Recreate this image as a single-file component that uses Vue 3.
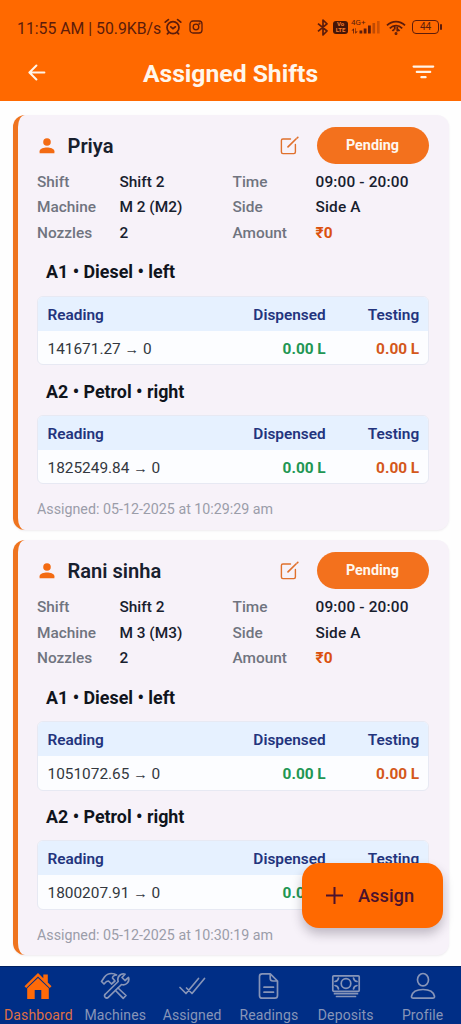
<script setup>
const shifts = [
  {
    name: 'Priya',
    machine: 'M 2 (M2)',
    assigned: '05-12-2025 at 10:29:29 am',
    nozzles: [
      { title: 'A1 • Diesel • left', from: '141671.27' },
      { title: 'A2 • Petrol • right', from: '1825249.84' },
    ],
  },
  {
    name: 'Rani sinha',
    machine: 'M 3 (M3)',
    assigned: '05-12-2025 at 10:30:19 am',
    nozzles: [
      { title: 'A1 • Diesel • left', from: '1051072.65' },
      { title: 'A2 • Petrol • right', from: '1800207.91' },
    ],
  },
]
const tabs = ['Dashboard', 'Machines', 'Assigned', 'Readings', 'Deposits', 'Profile']
</script>

<template>
  <div class="screen">
    <header class="top">
      <div class="status">
        <span class="clock">11:55 AM | 50.9KB/s</span>
        <svg class="alarm" width="18" height="18" viewBox="0 0 18 18" fill="none" stroke="currentColor" stroke-width="1.7" stroke-linecap="round">
          <circle cx="9" cy="9.6" r="6" /><path d="M6.8 8.8 9 10.6l2.4-1.8M1.2 4.2 4.4 1.6M16.8 4.2l-3.2-2.6M4.6 14.6 3.4 15.8M13.4 14.6l1.2 1.2" />
        </svg>
        <svg class="insta" width="14" height="14" viewBox="0 0 14 14" fill="none" stroke="currentColor" stroke-width="1.3">
          <rect x="1" y="1" width="12" height="12" rx="3" /><circle cx="7" cy="7" r="2.8" /><circle cx="10.5" cy="3.6" r=".4" />
        </svg>
        <span class="grow"></span>
        <svg class="bt" width="12" height="17" viewBox="0 0 12 17" fill="none" stroke="currentColor" stroke-width="1.7" stroke-linejoin="round">
          <path d="M1 4.6 10 12l-4 4V1l4 3.8L1 12.4" />
        </svg>
        <span class="volte"><b>Vo</b><b>LTE</b></span>
        <span class="cell">
          <span class="gen">4G+</span>
          <svg width="30" height="14" viewBox="0 0 30 14" fill="currentColor">
            <path d="M2.2 13.500V10.500H.4L3 8.200V13.500zM4.800 8.200V11.500h2l-2.600 2.300V8.200z" />
            <rect x="8.500" y="10.5" width="2.8" height="3" /><rect x="12.700" y="8.5" width="2.8" height="5" /><rect x="17" y="5.5" width="2.8" height="8" />
            <rect x="21.5" y="3" width="2.6" height="10.5" opacity=".4" /><rect x="26" y="1" width="2.6" height="12.5" opacity=".3" />
          </svg>
        </span>
        <svg class="wifi" width="20" height="15" viewBox="0 0 20 15" fill="none" stroke="currentColor" stroke-width="1.8">
          <path d="M1 5.4c5.2-5 12.8-5 18 0M3.8 8.4c3.6-3.6 8.8-3.6 12.4 0M6.4 11c.8-.9 1.6-1.3 2-1.5M13.6 11c-.8-.9-1.6-1.3-2-1.5M8.7 5v4.5M11.3 7v4.5" /><circle cx="10" cy="13.5" r=".6" />
        </svg>
        <span class="battery">44</span>
      </div>
      <div class="bar">
        <svg width="18" height="17" viewBox="0 0 18 17" fill="none" stroke="#fff4e8" stroke-width="2" stroke-linecap="round" stroke-linejoin="round">
          <path d="M16.4 8.5H1.6M8.4 1.5l-7 7 7 7" />
        </svg>
        <h1>Assigned Shifts</h1>
        <svg width="23" height="14" viewBox="0 0 23 14" stroke="#fff4e8" stroke-width="2.2" stroke-linecap="round">
          <path d="M1.6 1.6h19.6M4.8 6.9h13.4M9.4 12.2h4.2" />
        </svg>
      </div>
    </header>

    <main class="list">
      <section v-for="s in shifts" :key="s.name" class="card">
        <div class="head">
          <svg class="person" width="16" height="16" viewBox="0 0 16 16" fill="#f36b13">
            <circle cx="8" cy="4" r="3.8" /><path d="M.6 15.2v-2C.6 10.6 5 9.5 8 9.5s7.4 1.1 7.4 3.7v2z" />
          </svg>
          <h2>{{ s.name }}</h2>
          <svg class="edit" width="19" height="19" viewBox="0 0 19 19" fill="none" stroke="#e0712d" stroke-width="1.4" stroke-linecap="round" stroke-linejoin="round">
            <path d="M10.5 3H2.9Q1.4 3 1.4 4.5v11.6q0 1.5 1.5 1.5h11q1.5 0 1.5-1.5V8.5" /><path d="m8 10.8 8-7.8M17.3 1.8l.5-.5" stroke-width="1.7" />
          </svg>
          <span class="pill">Pending</span>
        </div>
        <dl class="info">
          <dt>Shift</dt><dd>Shift 2</dd><dt>Time</dt><dd>09:00 - 20:00</dd>
          <dt>Machine</dt><dd>{{ s.machine }}</dd><dt>Side</dt><dd>Side A</dd>
          <dt>Nozzles</dt><dd>2</dd><dt>Amount</dt><dd class="amount">₹0</dd>
        </dl>
        <div v-for="n in s.nozzles" :key="n.title" class="nozzle">
          <h3>{{ n.title }}</h3>
          <div class="table">
            <div class="row th"><span>Reading</span><span>Dispensed</span><span>Testing</span></div>
            <div class="row td"><span>{{ n.from }} <i>→</i> 0</span><span class="green">0.00 L</span><span class="rust">0.00 L</span></div>
          </div>
        </div>
        <p class="assigned">Assigned: {{ s.assigned }}</p>
      </section>
    </main>

    <button class="fab">
      <svg width="17" height="17" viewBox="0 0 17 17" stroke="currentColor" stroke-width="2"><path d="M8.5 0v17M0 8.5h17" /></svg>
      <span>Assign</span>
    </button>

    <nav class="tabs">
      <div v-for="(t, i) in tabs" :key="t" class="tab" :class="{ active: i === 0 }">
        <svg width="30" height="28" viewBox="0 0 30 28" fill="none" stroke="currentColor" stroke-width="1.7" stroke-linejoin="round" stroke-linecap="round">
          <template v-if="i === 0">
            <path fill="currentColor" stroke="none" d="M1.5 14.2 15 1l5.3 5.2V2.4h4.5v8.2l3.7 3.6-1.7 1.7L15 4.5 3.2 15.9z" />
            <path fill="currentColor" stroke="none" d="M4.2 16.3 15 6l10.8 10.3V27h-7.5v-9h-6.6v9H4.2z" />
          </template>
          <template v-else-if="i === 1">
            <path d="M1.5 9.5 4.5 5q2.5-3.500 7-3.500 3 0 5 1.500-4 .5-4 3l2.500 3-3.500 3-3-3-2 .5L4 12zM18 16l8 7.500-2.800 2.800-7.700-7.800" />
            <path d="M25 2.2q-3-1-5.500 1.300t-1.300 6L5.500 22q-1.800 1.500-.3 3.300 1.700 1.500 3.300-.2L21.500 12.500q3.500 1 5.800-1.500T28.500 5.500L25 8.500l-3-3z" />
          </template>
          <template v-else-if="i === 2">
            <path d="m3 15.5 6 6L21.5 6.5M9.5 16l5.5 5.500L27.500 6.500" />
          </template>
          <template v-else-if="i === 3">
            <path d="M8.2 1.8h8.1l7.200 7.200v14.500q0 2.700-2.700 2.700H8.2q-2.700 0-2.700-2.700V4.500q0-2.700 2.700-2.700M16.200 2v4.300q0 2.700 2.700 2.700h4.400M10 15.200h9.500M10 20.200h9.500" />
          </template>
          <template v-else-if="i === 4">
            <rect x="1.8" y="3.8" width="26.4" height="15.5" rx="1" /><circle cx="15" cy="11.5" r="4.8" />
            <path d="M4 9.5Q7 9 7.500 6M4 13.500q3 .5 3.500 3.500M26 9.500Q23 9 22.500 6M26 13.500q-3 .5-3.500 3.500M3.500 21.700h23M5.500 24.500h19" />
          </template>
          <template v-else>
            <ellipse cx="15" cy="7.7" rx="5.5" ry="6.2" /><path d="M5.3 26.2q-2 0-1.800-2C4.500 19.500 9 17.500 15 17.500s10.500 2 11.500 6.700q.2 2-1.800 2z" />
          </template>
        </svg>
        <span>{{ t }}</span>
      </div>
    </nav>
  </div>
</template>

<style>
body { margin: 0; background: #fefefe; }
</style>

<style scoped>
* { box-sizing: border-box; }
.screen { position: relative; width: 461px; height: 1024px; overflow: hidden; display: flex; flex-direction: column; background: #fefefe; font-family: Roboto, "Noto Sans", sans-serif; }
.top { flex: none; height: 101px; background: #ff6900; }
.status { display: flex; align-items: center; height: 54px; padding: 0 22px 0 17px; color: #5c1c0b; }
.clock { font-size: 15.8px; line-height: 20px; width: 145px; margin-top: 3px; white-space: nowrap; }
.alarm { margin-left: 2px; }
.insta { margin-left: 7px; }
.grow { flex: 1; }
.volte { display: flex; flex-direction: column; align-items: center; justify-content: center; width: 15px; height: 13px; margin-left: 4px; border-radius: 3px; background: #451507; color: #f57b2b; }
.volte b { font-size: 6px; line-height: 6px; }
.cell { position: relative; display: flex; width: 30px; margin-left: 3px; }
.gen { position: absolute; left: 0; top: -1.5px; font-size: 8px; line-height: 8px; }
.wifi { margin-left: 5px; }
.battery { position: relative; width: 27px; height: 14px; margin-left: 6px; border: 1.5px solid currentColor; border-radius: 4px; font-size: 10px; line-height: 12px; text-align: center; }
.battery::after { content: ""; position: absolute; right: -4px; top: 3px; width: 2px; height: 6px; background: currentColor; border-radius: 1px; }
.bar { display: flex; align-items: center; justify-content: space-between; height: 36px; padding: 0 26px 0 28px; }
h1 { margin: 3px 0 0 3px; font-size: 24.7px; font-weight: 700; line-height: 28px; color: #fff6eb; }
.list { flex: none; height: 865px; overflow: hidden; padding: 14px 12.5px 0 13px; display: flex; flex-direction: column; gap: 10.4px; }
.card { flex: none; height: 415px; border-left: 5px solid #ef741f; border-radius: 12px; background: #f7f2f9; padding: 12px 20px 0 19px; box-shadow: 0 1px 2px rgba(80, 60, 90, .09); }
.head { display: flex; align-items: center; height: 37px; }
.person { margin-left: 2px; }
h2 { flex: 1; margin: 1px 0 0 12.5px; font-size: 20.1px; line-height: 26px; font-weight: 600; color: #17202e; }
.edit { margin-right: 17.5px; }
.pill { width: 112px; height: 37px; border-radius: 19px; background: #f3711d; color: #fff7ef; font-size: 14.35px; font-weight: 700; line-height: 37px; text-align: center; }
.info { display: grid; grid-template-columns: 82.5px 113px 83px 1fr; grid-auto-rows: 25.6px; margin: 4.6px 0 0; font-size: 15.4px; line-height: 26px; }
.info dt { color: #70747f; font-weight: 500; }
.info dd { margin: 0; color: #17202e; font-weight: 500; white-space: nowrap; }
.info dd:nth-of-type(2n) { letter-spacing: .16px; }
.info .amount { color: #db500e; font-weight: 700; }
.nozzle { height: 119.2px; }
.nozzle h3 { margin: 0 0 0 9px; height: 50.4px; padding-top: 14px; font-size: 17.85px; line-height: 26px; font-weight: 700; color: #10141c; }
.table { height: 69.5px; border: 1px solid #e7e9f3; border-radius: 6px; overflow: hidden; background: #fcfdff; font-size: 15.4px; }
.row { display: grid; grid-template-columns: 1fr 110px 93.5px; align-items: center; height: 34px; padding: 0 8.3px 0 9.5px; }
.row span:not(:first-child) { text-align: right; }
.th { background: #e6f1ff; color: #23347d; font-weight: 600; padding-top: 2px; }
.td { color: #333840; padding-top: 1.5px; }
.td i { font-style: normal; font-size: 14.5px; }
.green { color: #219653; font-weight: 700; }
.rust { color: #d4581b; font-weight: 700; }
.assigned { margin: 15.4px 0 0; font-size: 14.25px; line-height: 20px; color: #9b9da9; }
.fab { position: absolute; left: 302px; top: 863px; width: 141px; height: 65px; display: flex; align-items: center; border: 0; border-radius: 17px; padding: 0 0 0 24px; gap: 15px; background: #ff6900; color: #4b122d; font-family: inherit; font-size: 18.3px; font-weight: 500; box-shadow: 0 6px 11px rgba(40, 30, 50, .27); }
.tabs { flex: none; height: 58px; display: grid; grid-template-columns: repeat(6, 1fr); background: #002e86; border-top: 1px solid #002060; }
.tab { display: flex; flex-direction: column; align-items: center; padding-top: 5px; color: #8795b8; }
.tab span { font-size: 14px; line-height: 18px; margin-top: 6px; letter-spacing: .12px; }
.tab.active { color: #ff6a08; }
.tab.active span { color: #df7045; }
</style>
